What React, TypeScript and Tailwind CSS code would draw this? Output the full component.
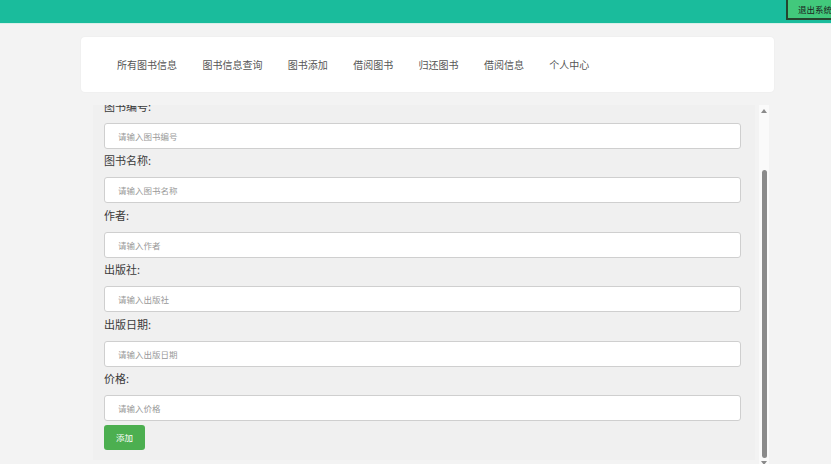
import { useEffect, useRef } from 'react'

const navItems = ['所有图书信息', '图书信息查询', '图书添加', '借阅图书', '归还图书', '借阅信息', '个人中心']

const fields = [
  { label: '图书编号', placeholder: '请输入图书编号' },
  { label: '图书名称', placeholder: '请输入图书名称' },
  { label: '作者', placeholder: '请输入作者' },
  { label: '出版社', placeholder: '请输入出版社' },
  { label: '出版日期', placeholder: '请输入出版日期' },
  { label: '价格', placeholder: '请输入价格' },
]

function ScrollBar() {
  // drawn by hand, the headless browser hides native scrollbars
  return (
    <div className="w-[10px] h-full bg-[#fafafa] flex flex-col items-center">
      <svg width="8" height="8" viewBox="0 0 8 8" className="mt-[2px] shrink-0">
        <path d="M4 2 L7 6 L1 6 Z" fill="#8a8a8a" />
      </svg>
      <div className="mt-[55px] w-[5px] h-[288px] rounded-full bg-[#8a8a8a]" />
      <svg width="8" height="8" viewBox="0 0 8 8" className="mt-[1px] shrink-0">
        <path d="M1 2 L7 2 L4 6 Z" fill="#8a8a8a" />
      </svg>
    </div>
  )
}

export default function App() {
  const scrollRef = useRef<HTMLDivElement>(null)

  useEffect(() => {
    // the page is shown scrolled to the bottom of the form
    if (scrollRef.current) scrollRef.current.scrollTop = scrollRef.current.scrollHeight
  }, [])

  return (
    <div className="w-[831px] h-[464px] overflow-hidden bg-[#f3f3f3] font-['Noto_Sans_CJK_SC',sans-serif]">
      {/* top bar */}
      <div className="h-[24px] bg-[#1abc9c] border-b border-[#d9efe9] flex overflow-hidden">
        <div className="flex-1" />
        <button className="shrink-0 w-[60px] h-[20px] mr-[-15px] bg-[#42c97c] border-l-2 border-b-2 border-[#24452f] text-[8.5px] text-[#1c1c1c] text-left pl-[10px] leading-none">
          退出系统
        </button>
      </div>

      {/* nav */}
      <div className="ml-[81px] mt-[13px] w-[693px] h-[55px] bg-white rounded-[4px] shadow-[0_0_2px_rgba(0,0,0,0.06)] flex items-center pl-[36px] gap-[25.4px]">
        {navItems.map(item => (
          <span key={item} className="text-[10px] text-[#555] leading-none whitespace-nowrap">{item}</span>
        ))}
      </div>

      {/* form area */}
      <div className="ml-[93px] mt-[13px] h-[365px] flex gap-[4px]">
        <div
          ref={scrollRef}
          className="w-[662px] h-full overflow-y-scroll [scrollbar-width:none]"
        >
          <div className="mb-[10px] bg-[#f0f0f0] pl-[11px] pr-[14px] pt-[72px] pb-[10px]">
            {fields.map(f => (
              <div key={f.label}>
                <div className="h-[28.5px] pt-[2.5px] text-[11px] leading-[18px] text-[#3a3a3a]">{f.label}:</div>
                <input
                  placeholder={f.placeholder}
                  className="block w-full h-[26px] bg-white border border-[#cfcfcf] rounded-[3px] pl-[13px] text-[8.5px] outline-none placeholder:text-[#999]"
                />
              </div>
            ))}
            <button className="mt-[4px] w-[41px] h-[25px] bg-[#4caf50] rounded-[3px] text-white text-[8.5px]">添加</button>
          </div>
        </div>
        <ScrollBar />
      </div>
    </div>
  )
}
